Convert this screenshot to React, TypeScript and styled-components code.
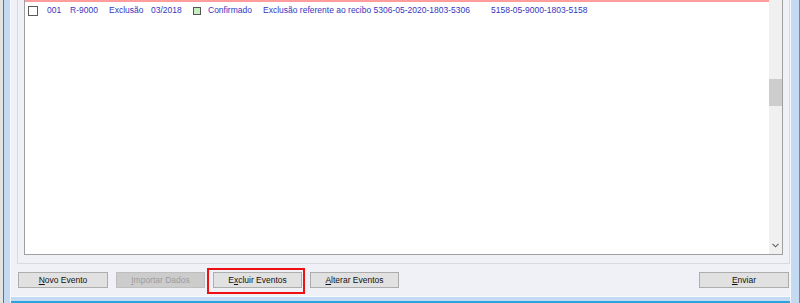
import React from 'react';
import styled, { createGlobalStyle } from 'styled-components';

const Global = createGlobalStyle`
  html, body { margin: 0; padding: 0; background: #f0f1f6; }
  body { font-family: "Liberation Sans", Arial, sans-serif; }
  #root { width: 800px; height: 303px; }
`;

const Window = styled.div`
  box-sizing: border-box;
  width: 800px;
  height: 303px;
  display: flex;
  flex-direction: column;
  background: #f0f1f6;
  padding: 0 10px 7px 11px;
  overflow: hidden;
  box-shadow:
    inset 3px 0 0 #e3e3e3,
    inset 4px 0 0 #6f6f6f,
    inset 10px 0 0 #c3daf2,
    inset 11px 0 0 #f8f9fc,
    inset -1px 0 0 #2ba4de,
    inset -9px 0 0 #c3daf2,
    inset -10px 0 0 #f8f9fc,
    inset 0 -2px 0 #2ba4de,
    inset 0 -6px 0 #c3daf2,
    inset 0 -7px 0 #f8f9fc;
`;

const GroupBox = styled.div`
  box-sizing: border-box;
  margin-left: 6px;
  height: 264px;
  flex: none;
  border: 1px solid #d8dade;
  border-top: none;
  padding: 0 6px 8px 6px;
  display: flex;
`;

const List = styled.div`
  flex: 1;
  display: flex;
  background: #ffffff;
  border: 1px solid #a0a0a0;
  border-top: none;
  min-width: 0;
`;

const Rows = styled.div`
  flex: 1;
  min-width: 0;
  border-top: 2px solid #ff9d9d;
`;

const Row = styled.div`
  display: flex;
  align-items: center;
  height: 17px;
  line-height: 17px;
  font-size: 8.5px;
  color: #3535c0;
  white-space: nowrap;
`;

const Cell = styled.div<{ $w?: number; $pl?: number }>`
  display: flex;
  align-items: center;
  flex: ${(p) => (p.$w ? `0 0 ${p.$w}px` : '1')};
  padding-left: ${(p) => p.$pl ?? 0}px;
  box-sizing: border-box;
  overflow: hidden;
`;

const CheckBox = styled.span`
  box-sizing: border-box;
  width: 10px;
  height: 10px;
  border: 1px solid #5a5a5a;
  background: #ffffff;
`;

const StatusSquare = styled.span`
  box-sizing: border-box;
  width: 8px;
  height: 8px;
  margin-right: 7px;
  border: 1px solid #555555;
  background: #c6efc0;
  flex: none;
`;

const ScrollBar = styled.div`
  flex: 0 0 13px;
  display: flex;
  flex-direction: column;
  background: #f0f0f0;
`;

const Thumb = styled.div`
  margin-top: 79px;
  height: 27px;
  background: #cdcdcd;
`;

const ArrowBox = styled.div`
  margin-top: auto;
  height: 17px;
  display: flex;
  align-items: center;
  justify-content: center;
`;

const ButtonRow = styled.div`
  display: flex;
  margin-top: 8px;
  height: 16px;
  padding: 0 1px 0 7px;
  gap: 8px;
`;

const Button = styled.div<{ $w: number; $disabled?: boolean; $push?: boolean }>`
  position: relative;
  box-sizing: border-box;
  width: ${(p) => p.$w}px;
  height: 16px;
  flex: none;
  margin-left: ${(p) => (p.$push ? 'auto' : '0')};
  border: 1px solid ${(p) => (p.$disabled ? '#bfbfbf' : '#adadad')};
  background: ${(p) => (p.$disabled ? '#cccccc' : '#e1e1e1')};
  color: ${(p) => (p.$disabled ? '#9d9d9d' : '#111111')};
  font-size: 8.5px;
  line-height: 15px;
  text-align: center;
  white-space: nowrap;
  u { text-underline-offset: 1px; }
`;

const Highlight = styled.span`
  position: absolute;
  left: -7px;
  right: -4px;
  top: -5px;
  bottom: -7px;
  border: 2px solid #ee1111;
  pointer-events: none;
`;

export default function App() {
  return (
    <>
      <Global />
      <Window>
        <GroupBox>
          <List>
            <Rows>
              <Row>
                <Cell $w={22} $pl={3}>
                  <CheckBox />
                </Cell>
                <Cell $w={23}>001</Cell>
                <Cell $w={39}>R-9000</Cell>
                <Cell $w={42}>Exclusão</Cell>
                <Cell $w={42}>03/2018</Cell>
                <Cell $w={70}>
                  <StatusSquare />
                  Confirmado
                </Cell>
                <Cell $w={228}>Exclusão referente ao recibo 5306-05-2020-1803-5306</Cell>
                <Cell>5158-05-9000-1803-5158</Cell>
              </Row>
            </Rows>
            <ScrollBar>
              <Thumb />
              <ArrowBox>
                <svg width="7" height="5" viewBox="0 0 7 5">
                  <path d="M0.5 0.8 L3.5 3.8 L6.5 0.8" fill="none" stroke="#606060" strokeWidth="1.1" />
                </svg>
              </ArrowBox>
            </ScrollBar>
          </List>
        </GroupBox>
        <ButtonRow>
          <Button $w={90}>
            <u>N</u>ovo Evento
          </Button>
          <Button $w={89} $disabled>
            <u>I</u>mportar Dados
          </Button>
          <Button $w={89}>
            E<u>x</u>cluir Eventos
            <Highlight />
          </Button>
          <Button $w={89}>
            <u>A</u>lterar Eventos
          </Button>
          <Button $w={90} $push>
            <u>E</u>nviar
          </Button>
        </ButtonRow>
      </Window>
    </>
  );
}
